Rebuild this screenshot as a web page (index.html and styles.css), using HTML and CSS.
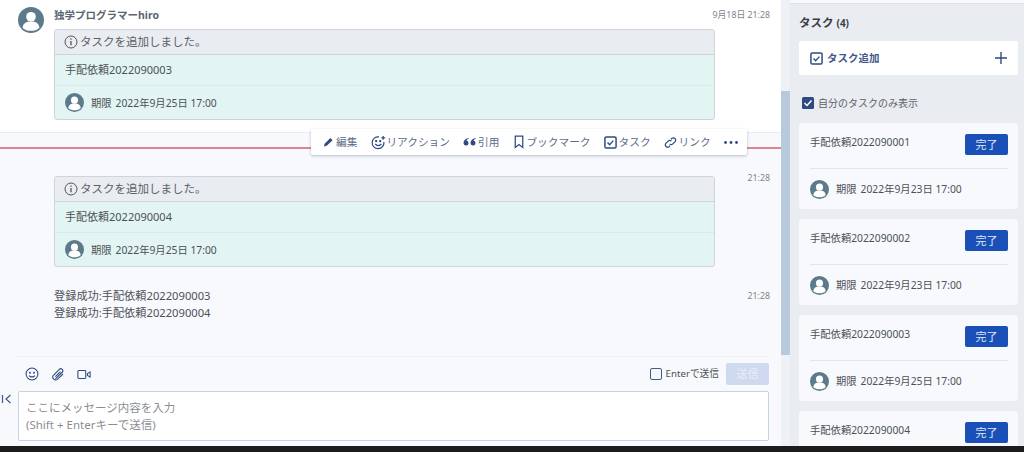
FILE: index.html
```html
<!DOCTYPE html>
<html lang="ja">
<head>
  <meta charset="UTF-8">
  <title>タスク</title>
  <link rel="stylesheet" href="styles.css">
</head>
<body>
  <svg width="0" height="0" class="defs">
    <symbol id="user" viewBox="0 0 28 28">
      <circle cx="14" cy="14" r="14" fill="#5b7a8c"/>
      <circle cx="14" cy="10.5" r="5.2" fill="#fff"/>
      <path d="M5 22.5c0-5 4-7 9-7s9 2 9 7c-2.500 2.300-5.500 3-9 3s-6.500-.7-9-3z" fill="#fff"/>
    </symbol>
    <symbol id="check" viewBox="0 0 14 14">
      <rect x="1" y="1" width="12" height="12" rx="1.500" fill="none" stroke="currentColor" stroke-width="1.600"/>
      <path d="M3.800 7l2.300 2.300 4-4.300" fill="none" stroke="currentColor" stroke-width="1.500"/>
    </symbol>
  </svg>

  <div class="app">
    <div class="main">
      <div class="messages">
        <div class="msg msg-first">
          <svg class="avatar"><use href="#user"/></svg>
          <div class="msg-body">
            <div class="msg-head">
              <span class="name">独学プログラマーhiro</span>
              <span class="time">9月18日 21:28</span>
            </div>
            <div class="taskbox">
              <div class="taskbox-title">
                <svg class="info" viewBox="0 0 14 14"><circle cx="7" cy="7" r="6" fill="none" stroke="#555" stroke-width="1"/><path d="M7 6v4.200M7 3.600v1.200" stroke="#555" stroke-width="1.300"/></svg>
                タスクを追加しました。
              </div>
              <div class="taskbox-name">手配依頼2022090003</div>
              <div class="taskbox-due">
                <svg class="avatar-sm"><use href="#user"/></svg>
                <span>期限</span><span class="date">2022年9月25日 17:00</span>
              </div>
            </div>
          </div>
        </div>

        <div class="newline"></div>

        <div class="msg msg-second">
          <div class="msg-body">
            <div class="taskbox">
              <div class="taskbox-title">
                <svg class="info" viewBox="0 0 14 14"><circle cx="7" cy="7" r="6" fill="none" stroke="#555" stroke-width="1"/><path d="M7 6v4.200M7 3.600v1.200" stroke="#555" stroke-width="1.300"/></svg>
                タスクを追加しました。
              </div>
              <div class="taskbox-name">手配依頼2022090004</div>
              <div class="taskbox-due">
                <svg class="avatar-sm"><use href="#user"/></svg>
                <span>期限</span><span class="date">2022年9月25日 17:00</span>
              </div>
            </div>
          </div>
          <span class="time">21:28</span>
        </div>

        <div class="msg msg-third">
          <div class="msg-body plain">登録成功:手配依頼2022090003<br>登録成功:手配依頼2022090004</div>
          <span class="time">21:28</span>
        </div>

        <div class="actions">
          <span class="action">
            <svg viewBox="0 0 12 12" width="11" height="12"><path d="M1 11l.8-3L8 1.500 10.500 4 4 10.200z" fill="#2f4a80"/></svg>編集
          </span>
          <span class="action action-react">
            <svg viewBox="0 0 16 16" width="15" height="15" fill="none" stroke="#2f4a80" stroke-width="1.300"><path d="M13.800 7.500A6.300 6.300 0 1 1 8.500 2"/><circle cx="5.500" cy="6.500" r=".6"/><circle cx="9.800" cy="6.500" r=".6"/><path d="M4.500 9.500c1.500 2.500 5 2.500 6.500 0M13 1v4M11 3h4"/></svg>リアクション
          </span>
          <span class="action">
            <svg viewBox="0 0 13 8" width="13" height="8" fill="#2f4a80"><path d="M5.500 0C2.500.8.500 2.500.5 5a2.500 2.500 0 1 0 3-2.400C3.800 1.800 4.600 1 5.800 .7zM12.500 0C9.500.8 7.500 2.500 7.500 5a2.500 2.500 0 1 0 3-2.400c.3-.8 1.100-1.600 2.300-1.900z"/></svg>引用
          </span>
          <span class="action action-mark">
            <svg viewBox="0 0 12 16" width="10" height="14"><path d="M1.500 1h9v13.500L6 11l-4.500 3.500z" fill="none" stroke="#2f4a80" stroke-width="1.500"/></svg>ブックマーク
          </span>
          <span class="action">
            <svg width="13" height="13" class="checkicon"><use href="#check"/></svg>タスク
          </span>
          <span class="action">
            <svg viewBox="0 0 14 14" width="13" height="13" fill="none" stroke="#2f4a80" stroke-width="1.300"><path d="M6 8.500a2.500 2.500 0 0 0 3.500 0l2.500-2.500A2.500 2.500 0 0 0 8.500 2.500L7.500 3.500"/><path d="M8 5.500a2.500 2.500 0 0 0-3.500 0L2 8a2.500 2.500 0 0 0 3.500 3.500l1-1"/></svg>リンク
          </span>
          <svg class="more" viewBox="0 0 14 3" width="14" height="3" fill="#2f4a80"><circle cx="1.500" cy="1.500" r="1.400"/><circle cx="7" cy="1.500" r="1.400"/><circle cx="12.500" cy="1.500" r="1.400"/></svg>
        </div>
      </div>

      <div class="composer">
        <div class="tools">
          <svg viewBox="0 0 16 16" width="14" height="14" fill="none" stroke="#2f4a80" stroke-width="1.200"><circle cx="8" cy="8" r="6.800"/><circle cx="5.700" cy="6.500" r=".5"/><circle cx="10.300" cy="6.500" r=".5"/><path d="M4.800 9.800c1.500 2 5 2 6.400 0"/></svg>
          <svg viewBox="0 0 16 16" width="14" height="14" fill="none" stroke="#2f4a80" stroke-width="1.200"><path d="M5 13.500L12.800 6a2.300 2.300 0 0 0-3.300-3.300L2.500 9.800a3.300 3.300 0 0 0 4.700 4.400L13.800 8M5 11L10.800 5.200"/></svg>
          <svg viewBox="0 0 16 12" width="14" height="11" fill="none" stroke="#2f4a80" stroke-width="1.200"><rect x="1" y="1.500" width="9" height="9" rx="1"/><path d="M12 5l3-2v6l-3-2z"/></svg>
          <label class="enter"><span class="box"></span>Enterで送信</label>
          <button class="send">送信</button>
        </div>
        <div class="input-row">
          <svg class="collapse" viewBox="0 0 11 10" width="11" height="10" fill="none" stroke="#3c5a8c" stroke-width="1.200"><path d="M1.500 1v8M9.500 1L5 5l4.500 4"/></svg>
          <textarea class="input" placeholder="ここにメッセージ内容を入力&#10;(Shift + Enterキーで送信)"></textarea>
        </div>
      </div>
    </div>

    <div class="scrollbar"><div class="thumb"></div></div>

    <div class="side">
      <h2 class="side-title">タスク <small>(4)</small></h2>
      <div class="add-task">
        <svg width="13" height="13" class="checkicon"><use href="#check"/></svg>
        <span>タスク追加</span>
        <svg class="plus" viewBox="0 0 12 12" width="12" height="12"><path d="M6 0v12M0 6h12" stroke="#2f4a80" stroke-width="1.400"/></svg>
      </div>
      <label class="only-mine">
        <svg viewBox="0 0 12 12" width="12" height="12"><rect width="12" height="12" rx="1.500" fill="#2f4a80"/><path d="M2.500 6l2.500 2.500 4.500-5" fill="none" stroke="#fff" stroke-width="1.500"/></svg>
        自分のタスクのみ表示
      </label>
      <div class="card">
        <div class="card-top"><span>手配依頼2022090001</span><button class="done">完了</button></div>
        <div class="card-due"><svg class="avatar-sm"><use href="#user"/></svg><span>期限</span><span class="date">2022年9月23日 17:00</span></div>
      </div>
      <div class="card">
        <div class="card-top"><span>手配依頼2022090002</span><button class="done">完了</button></div>
        <div class="card-due"><svg class="avatar-sm"><use href="#user"/></svg><span>期限</span><span class="date">2022年9月23日 17:00</span></div>
      </div>
      <div class="card">
        <div class="card-top"><span>手配依頼2022090003</span><button class="done">完了</button></div>
        <div class="card-due"><svg class="avatar-sm"><use href="#user"/></svg><span>期限</span><span class="date">2022年9月25日 17:00</span></div>
      </div>
      <div class="card">
        <div class="card-top"><span>手配依頼2022090004</span><button class="done">完了</button></div>
      </div>
    </div>
  </div>
  <div class="taskbar"></div>
</body>
</html>
```

FILE: styles.css
```css
html, body {
  margin: 0;
  height: 452px;
  overflow: hidden;
}
body {
  font-family: "Noto Sans", "Noto Sans CJK JP", sans-serif;
  font-size: 11px;
  line-height: 16px;
  color: #4d5157;
  background: #f7f9fc;
}
.defs {
  position: absolute;
}
.app {
  display: flex;
  height: 446px;
  overflow: hidden;
}
.taskbar {
  height: 6px;
  background: #1c1c1c;
}

/* message column */
.main {
  width: 781px;
  flex: none;
  display: flex;
  flex-direction: column;
}
.messages {
  position: relative;
  height: 356px;
  flex: none;
}
.msg {
  display: flex;
}
.msg-first {
  height: 133px;
  box-sizing: border-box;
  background: #fff;
  padding: 7px 11px 0 18px;
  border-bottom: 1px solid #e6ebf5;
}
.msg-first .avatar {
  width: 26px;
  height: 26px;
  margin-right: 10px;
  flex: none;
}
.msg-body {
  flex: 1;
}
.msg-head {
  display: flex;
  justify-content: space-between;
  height: 22px;
  align-items: flex-start;
}
.name {
  font-weight: 700;
  font-size: 10.5px;
  color: #5a6570;
}
.time {
  font-size: 8.800px;
  color: #808489;
}
.taskbox {
  width: 661px;
  box-sizing: border-box;
  border: 1px solid #cfd3da;
  border-radius: 3px;
  background: #e2f5f2;
  height: 91px;
  overflow: hidden;
}
.taskbox-title {
  height: 24px;
  background: #e9ecf1;
  border-bottom: 1px solid #cfd3da;
  display: flex;
  align-items: center;
  gap: 2px;
  padding-left: 9px;
  font-size: 11.500px;
  color: #5c6066;
}
.info {
  width: 14px;
  height: 14px;
}
.taskbox-name {
  height: 30px;
  display: flex;
  align-items: center;
  padding-left: 10px;
  border-bottom: 1px solid #d5ecea;
}
.taskbox-due {
  display: flex;
  align-items: center;
  height: 33px;
  padding-left: 10px;
  font-size: 10.300px;
}
.avatar-sm {
  width: 19px;
  height: 19px;
  margin-right: 7px;
  flex: none;
}
.date {
  margin-left: 4px;
}
.newline {
  height: 14px;
  border-bottom: 2px solid #dd8496;
}
.msg-second {
  padding: 27px 11px 0 54px;
}
.msg-third {
  padding: 20px 11px 0 54px;
}
.msg-second .time {
  line-height: 12px;
  margin-top: -4px;
}
.msg-third .time {
  line-height: 12px;
  margin-top: 3px;
}
.plain {
  font-size: 11.200px;
  line-height: 17px;
}

/* hover toolbar */
.actions {
  position: absolute;
  left: 311px;
  top: 129px;
  width: 436px;
  height: 26px;
  box-sizing: border-box;
  background: #fff;
  border-radius: 2px;
  box-shadow: 0 1px 3px rgba(60, 80, 120, 0.35);
  display: flex;
  align-items: center;
  gap: 13px;
  padding-left: 12px;
  color: #5d6c8c;
  font-size: 10.700px;
}
.action {
  display: flex;
  align-items: center;
  gap: 2px;
  white-space: nowrap;
}
.action-react {
  gap: 0;
  margin-left: 1px;
}
.action-mark {
  margin-left: 2px;
}
.checkicon {
  color: #2f4a80;
  flex: none;
}
.more {
  flex: none;
}

/* composer */
.composer {
  flex: 1;
  padding: 0 12px 0 0;
}
.tools {
  margin-left: 16px;
  height: 34px;
  border-top: 1px solid #eef0f4;
  display: flex;
  align-items: center;
  gap: 12px;
  padding-left: 9px;
}
.enter {
  margin-left: auto;
  display: flex;
  align-items: center;
  gap: 4px;
  font-size: 9.700px;
}
.box {
  width: 10px;
  height: 10px;
  border: 1px solid #43598a;
  border-radius: 2px;
}
.send {
  width: 43px;
  height: 22px;
  border: none;
  border-radius: 2px;
  background: #cfdaf0;
  color: #e8eef9;
  font: inherit;
  padding: 0;
  margin-left: -5px;
}
.input-row {
  display: flex;
  gap: 6px;
  padding-left: 1px;
}
.collapse {
  margin-top: 3px;
  flex: none;
}
.input {
  flex: 1;
  height: 50px;
  box-sizing: border-box;
  border: 1px solid #c5d3e3;
  border-radius: 2px;
  background: #fff;
  padding: 7px 7px 0;
  font: inherit;
  font-size: 11.500px;
  line-height: 17px;
  resize: none;
  outline: none;
}
.input::placeholder {
  color: #8a8e94;
  opacity: 1;
}

/* scrollbar */
.scrollbar {
  width: 9px;
  flex: none;
  background: #eef1f6;
  padding-top: 91px;
  box-sizing: border-box;
}
.thumb {
  height: 264px;
  background: #b9c9dc;
}

/* right panel */
.side {
  flex: 1;
  background: #e9ecf1;
  padding: 1px 6px 0 9px;
  border-top: 1px solid #dfe3e9;
  margin-top: 3px;
  overflow: hidden;
  min-width: 0;
}
.side-title {
  margin: 9px 0 9px;
  font-size: 11.500px;
  line-height: 18px;
  font-weight: 700;
  color: #3b3f44;
}
.side-title small {
  font-size: 10px;
}
.add-task {
  height: 34px;
  background: #fff;
  border-radius: 2px;
  display: flex;
  align-items: center;
  gap: 4px;
  padding: 0 11px;
  font-weight: 700;
  color: #43598a;
  font-size: 10.500px;
}
.plus {
  margin-left: auto;
}
.only-mine {
  display: flex;
  align-items: center;
  gap: 4px;
  height: 20px;
  margin: 18px 0 10px 3px;
  font-size: 10px;
  color: #5f6368;
}
.card {
  height: 86px;
  box-sizing: border-box;
  background: #f7f9fc;
  border-radius: 4px;
  padding: 0 10px 0 11px;
  margin-bottom: 10px;
}
.card-top {
  height: 46px;
  border-bottom: 1px solid #dfe5ec;
  display: flex;
  justify-content: space-between;
  padding-top: 11px;
  box-sizing: border-box;
  font-size: 10.300px;
}
.done {
  width: 43px;
  height: 21px;
  border: none;
  border-radius: 2px;
  background: #1a4fb8;
  color: #dfe8f8;
  font: inherit;
  font-size: 11px;
  padding: 0;
}
.card-due {
  display: flex;
  align-items: center;
  height: 40px;
  font-size: 10.300px;
}
```
